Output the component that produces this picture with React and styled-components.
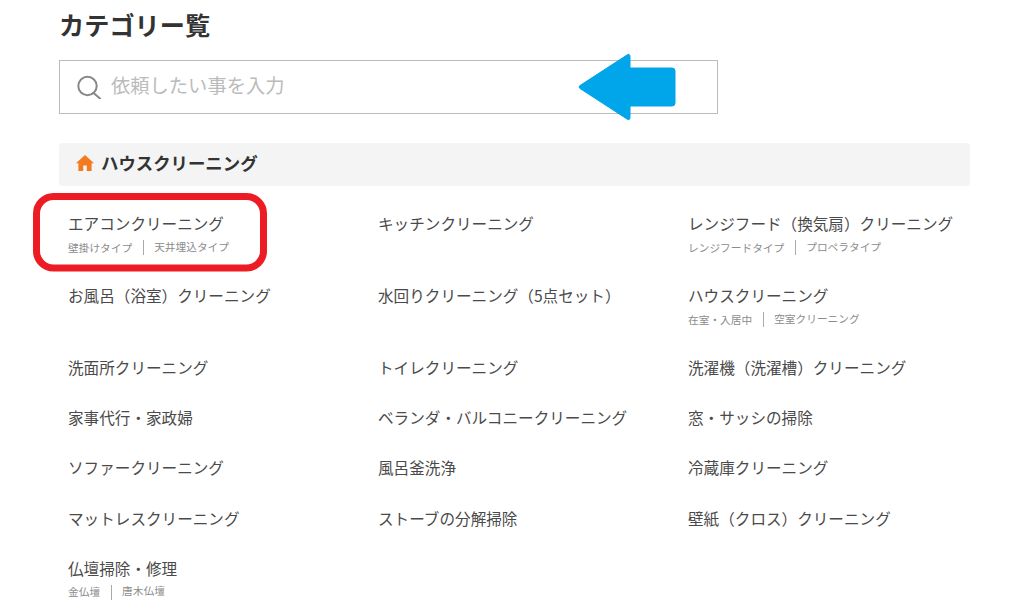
import React from "react";
import styled, { createGlobalStyle } from "styled-components";

const Global = createGlobalStyle`
  html, body { margin: 0; padding: 0; background: #fff; }
  body { font-family: "Noto Sans CJK JP", "Noto Sans", sans-serif; color: #333; overflow: hidden; }
`;
const Page = styled.div`
  position: relative;
  width: 1024px;
  height: 612px;
  overflow: hidden;
  padding: 6px 54px 0 59px;
  box-sizing: border-box;
`;
const Title = styled.h1`
  margin: 0;
  font-size: 25.2px;
  line-height: 36px;
  font-weight: 700;
  color: #333;
`;
const Search = styled.div`
  margin-top: 18px;
  width: 659px;
  height: 54px;
  box-sizing: border-box;
  border: 1px solid #bbb;
  display: flex;
  align-items: center;
  padding-left: 17px;
  gap: 9px;
`;
const Placeholder = styled.span`
  font-size: 19.3px;
  color: #bbb;
  line-height: 1;
  margin-top: -2px;
`;
const Section = styled.h2`
  margin: 29px 0 0;
  height: 43px;
  background: #f4f4f4;
  border-radius: 3px;
  display: flex;
  align-items: center;
  box-sizing: border-box;
  padding: 0 0 4px 17px;
  gap: 7px;
  font-size: 17.4px;
  font-weight: 700;
  color: #333;
`;
const Grid = styled.ul`
  list-style: none;
  margin: 13px 0 0;
  padding: 0;
  display: grid;
  grid-template-columns: repeat(3, 310px);
`;
const Item = styled.li`
  padding: 12px 0 14px 9px;
  box-sizing: border-box;
  min-height: 50.2px;
`;
const Name = styled.div`
  font-size: 15.6px;
  line-height: 24px;
  color: #4a4a4a;
  white-space: nowrap;
`;
const Subs = styled.div`
  display: flex;
  align-items: center;
  height: 22px;
  padding-top: 2px;
  box-sizing: border-box;
  font-size: 10.7px;
  color: #8c8c8c;
  white-space: nowrap;
`;
const Sub = styled.span`
  & + &::before {
    content: "";
    display: inline-block;
    width: 1px;
    height: 15px;
    background: #aaa;
    margin: 0 10px 0 11px;
    vertical-align: middle;
  }
`;
const Overlay = styled.svg`
  position: absolute;
  left: 0;
  top: 0;
  pointer-events: none;
`;

const items = [
  ["エアコンクリーニング", ["壁掛けタイプ", "天井埋込タイプ"]],
  ["キッチンクリーニング"],
  ["レンジフード（換気扇）クリーニング", ["レンジフードタイプ", "プロペラタイプ"]],
  ["お風呂（浴室）クリーニング"],
  ["水回りクリーニング（5点セット）"],
  ["ハウスクリーニング", ["在室・入居中", "空室クリーニング"]],
  ["洗面所クリーニング"],
  ["トイレクリーニング"],
  ["洗濯機（洗濯槽）クリーニング"],
  ["家事代行・家政婦"],
  ["ベランダ・バルコニークリーニング"],
  ["窓・サッシの掃除"],
  ["ソファークリーニング"],
  ["風呂釜洗浄"],
  ["冷蔵庫クリーニング"],
  ["マットレスクリーニング"],
  ["ストーブの分解掃除"],
  ["壁紙（クロス）クリーニング"],
  ["仏壇掃除・修理", ["金仏壇", "唐木仏壇"]],
];

export default function App() {
  return (
    <Page>
      <Global />
      <Title>カテゴリー覧</Title>
      <Search>
        <svg width="25" height="24" viewBox="0 0 25 24" fill="none" stroke="#888" strokeWidth="2">
          <circle cx="10.5" cy="11" r="9.2" />
          <path d="M16.5 18 L23 23.5" strokeLinecap="round" />
        </svg>
        <Placeholder>依頼したい事を入力</Placeholder>
      </Search>
      <Section>
        <svg width="18" height="16" viewBox="0 0 18 16" fill="#f47a20">
          <path d="M9 0 L18 8.2 L15.6 8.2 L15.6 16 L10.8 16 L10.8 10.5 L7.2 10.5 L7.2 16 L2.4 16 L2.4 8.2 L0 8.2 Z" />
        </svg>
        ハウスクリーニング
      </Section>
      <Grid>
        {items.map(([name, subs]) => (
          <Item key={name}>
            <Name>{name}</Name>
            {subs && (
              <Subs>
                {subs.map((s) => (
                  <Sub key={s}>{s}</Sub>
                ))}
              </Subs>
            )}
          </Item>
        ))}
      </Grid>
      <Overlay width="1024" height="612" viewBox="0 0 1024 612">
        <rect x="36.5" y="196.5" width="227" height="71.5" rx="17" fill="none" stroke="#ed1c24" strokeWidth="7" />
        <path
          d="M627 55 L580 85.5 Q578 87 580 88.5 L627 119 Q630 121 630 117 L630 106 L672 106 Q675 106 675 103 L675 71 Q675 68 672 68 L630 68 L630 57 Q630 53 627 55 Z"
          fill="#00a6e9"
          stroke="#00a6e9"
          strokeWidth="1"
          strokeLinejoin="round"
        />
      </Overlay>
    </Page>
  );
}
